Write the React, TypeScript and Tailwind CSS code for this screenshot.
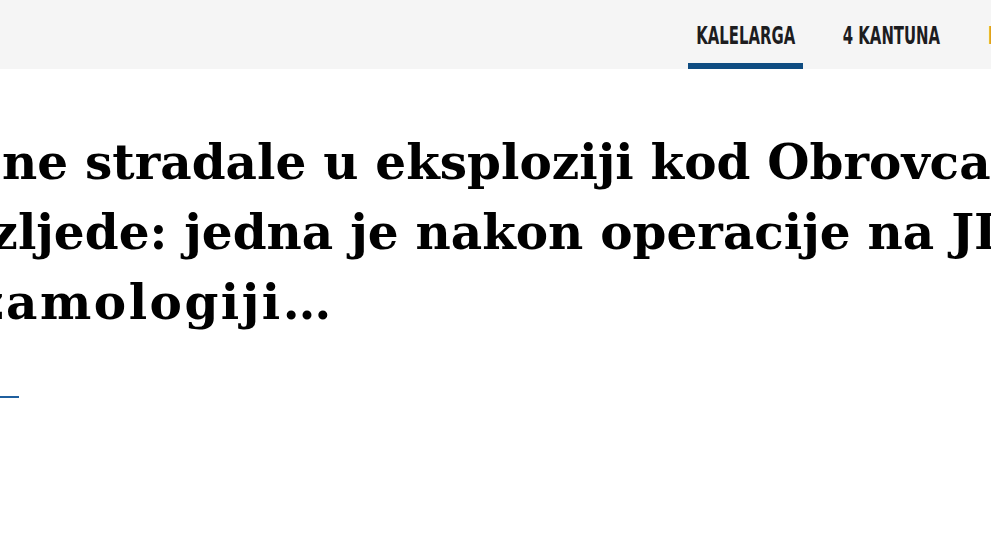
import React from "react";

const navFont = { fontFamily: '"DejaVu Sans", sans-serif' };

export default function App() {
  return (
    <div className="w-[991px] h-[558px] bg-white overflow-hidden relative">
      <header className="h-[69px] bg-[#f5f5f5] flex whitespace-nowrap overflow-hidden pl-[688px] gap-[32px]">
        <a className="h-full w-[115px] shrink-0 flex items-center justify-center border-b-[6px] border-[#0f4c81] pt-[9px] text-[#1d1d1f] text-[24px] font-bold uppercase" style={navFont}>
          <span className="inline-block scale-x-[0.62]">Kalelarga</span>
        </a>
        <a className="h-full w-[112px] shrink-0 flex items-center justify-center border-b-[6px] border-transparent pt-[9px] text-[#1d1d1f] text-[24px] font-bold uppercase" style={navFont}>
          <span className="inline-block scale-x-[0.62]">4 Kantuna</span>
        </a>
        <a className="h-full shrink-0 flex items-center pl-[9px] border-b-[6px] border-transparent pt-[9px] text-[#e0a21b] text-[24px] font-bold uppercase" style={navFont}>
          <span className="inline-block scale-x-[0.62] origin-left">Promo</span>
        </a>
      </header>
      <main className="overflow-hidden">
        <h1 className="mt-[58px] text-black font-bold text-[48.5px] leading-[70px] whitespace-nowrap" style={{ fontFamily: '"DejaVu Serif", serif' }}>
          <span className="block ml-[2px]">ne stradale u eksploziji kod Obrovca zadobile</span>
          <span className="block ml-[-42px]">ozljede: jedna je nakon operacije na JIL</span>
          <span className="block ml-[-24px] tracking-[2.5px]">zamologiji…</span>
        </h1>
        <div className="mt-[59px] w-[19px] h-[2px] bg-[#1f5f9e]" />
      </main>
    </div>
  );
}
